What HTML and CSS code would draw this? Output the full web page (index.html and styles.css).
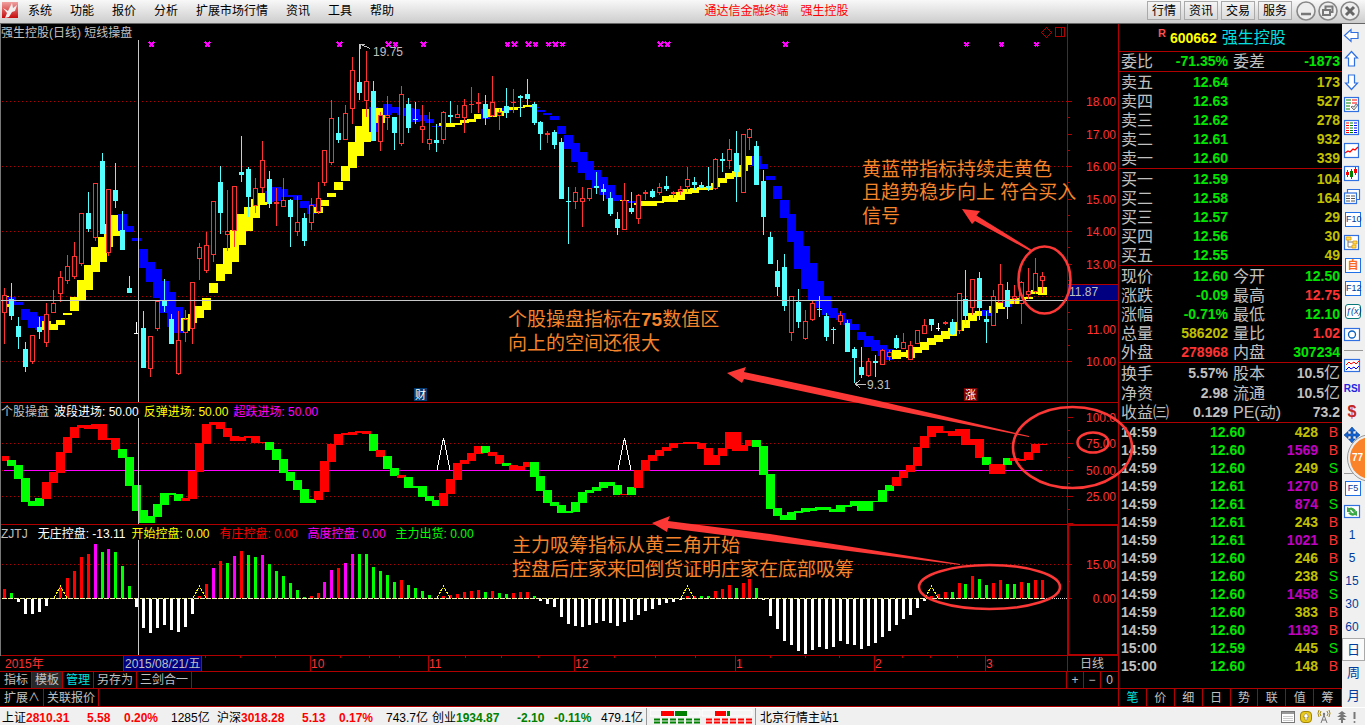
FILE: index.html
```html
<!DOCTYPE html>
<html lang="zh-CN">
<head>
<meta charset="utf-8">
<title>通达信金融终端 强生控股</title>
<link rel="stylesheet" href="styles.css">
</head>
<body>
<header class="menubar">
  <svg class="logo" viewBox="0 0 17 17" aria-hidden="true"><defs><linearGradient id="lg" x1="0" y1="0" x2="0" y2="1"><stop offset="0" stop-color="#f0a0a0"/><stop offset="1" stop-color="#c80c0c"/></linearGradient></defs><rect width="16" height="16" fill="url(#lg)"/><path d="M1 6l5 3L10 1l1 5 4-3-2 6-3 1-3 5-4 1 2-5z" fill="#f2eeee"/></svg>
  <nav class="menu">
    <button>系统</button><button>功能</button><button>报价</button><button>分析</button><button>扩展市场行情</button><button>资讯</button><button>工具</button><button>帮助</button>
  </nav>
  <div class="title"><span>通达信金融终端</span><span>强生控股</span></div>
  <div class="quick"><button>行情</button><button>资讯</button><button>交易</button><button>服务</button></div>
  <div class="winctl">
    <button aria-label="最小化"><svg viewBox="0 0 20 20"><circle cx="10" cy="10" r="9" fill="#eee" stroke="#888" stroke-width="1.6"/><path d="M5 13h10" stroke="#777" stroke-width="2.5"/></svg></button>
    <button aria-label="还原"><svg viewBox="0 0 20 20"><circle cx="10" cy="10" r="9" fill="#eee" stroke="#888" stroke-width="1.6"/><path d="M7.500 9V5.500h7V11H12M5 9h7v5H5z" fill="none" stroke="#777" stroke-width="2"/></svg></button>
    <button aria-label="关闭"><svg viewBox="0 0 20 20"><circle cx="10" cy="10" r="9" fill="#eee" stroke="#888" stroke-width="1.600"/><path d="M6 6l8 8M14 6l-8 8" stroke="#666" stroke-width="3"/></svg></button>
  </div>
</header>

<div class="workspace">
  <main class="charts">
    <section class="pane">
      <div class="legend"><span class="gray">强生控股(日线) 短线操盘</span></div>
      <svg id="price" viewBox="0 24 1118 379"></svg>
    </section>
    <section class="pane">
      <div class="legend"><span class="gray">个股操盘</span><span class="white">波段进场: 50.00</span><span class="yellow">反弹进场: 50.00</span><span class="magenta">超跌进场: 50.00</span></div>
      <svg id="osc" viewBox="0 403 1118 122"></svg>
    </section>
    <section class="pane">
      <div class="legend wide"><span class="gray">ZJTJ</span><span class="white">无庄控盘: -13.11</span><span class="yellow first">开始控盘: 0.00</span><span class="brightred">有庄控盘: 0.00</span><span class="magenta">高度控盘: 0.00</span><span class="lime">主力出货: 0.00</span></div>
      <svg id="ctrl" viewBox="0 525 1118 131"></svg>
    </section>
    <svg id="dates" viewBox="0 656 1118 16"></svg>
    <div class="tabs">
      <button>指标</button><button class="pressed">模板</button><button class="cyan">管理</button><button class="roomy">另存为</button><button class="roomy">三剑合一</button>
      <span class="zoomers"><button aria-label="放大">+</button><button aria-label="缩小">−</button><button>0</button></span>
    </div>
    <div class="tabs second"><button>扩展∧</button><button>关联报价</button></div>
    <svg class="notes" viewBox="0 24 1118 683">
      <g class="note">
        <text x="862" y="176">黄蓝带指标持续走黄色</text>
        <text x="862" y="199">且趋势稳步向上 符合买入</text>
        <text x="862" y="223">信号</text>
        <text x="508" y="326">个股操盘指标在<tspan class="strong">75</tspan>数值区</text>
        <text x="508" y="350">向上的空间还很大</text>
        <text x="512" y="552">主力吸筹指标从黄三角开始</text>
        <text x="512" y="576">控盘后庄家来回倒货证明庄家在底部吸筹</text>
      </g>
      <g fill="#fb3836">
        <path d="M962 209L980 211L976.500 215.500L1032 250L1030 251L975 221L972 224Z"/>
        <path d="M727 373L746 367L744 372L875 400L1029 436L1029 437L848 401L744 379L742 383Z"/>
        <path d="M652 523L670 516L668 521L770 534L960 564L960 565L770 541L668 528L667 532Z"/>
      </g>
      <g fill="none" stroke="#fb3836" stroke-width="2.600">
        <ellipse cx="1044.500" cy="280" rx="26" ry="33.500"/>
        <ellipse cx="1072.500" cy="447.500" rx="59.500" ry="40.500"/>
        <ellipse cx="1093" cy="442.500" rx="15.500" ry="10"/>
        <ellipse cx="989.500" cy="587" rx="70.500" ry="22"/>
      </g>
    </svg>
  </main>

  <aside class="panel">
    <h1 class="stock"><sup>R</sup><span class="code">600662</span><span class="name">强生控股</span></h1>
    <table class="quote"><colgroup><col class="a"><col class="b"><col class="c"><col class="d"></colgroup>
      <tbody><tr><th>委比</th><td class="g">-71.35%</td><th>委差</th><td class="g">-1873</td></tr></tbody>
      <tbody class="group">
        <tr><th>卖五</th><td class="g">12.64</td><th></th><td class="y">173</td></tr>
        <tr><th>卖四</th><td class="g">12.63</td><th></th><td class="y">527</td></tr>
        <tr><th>卖三</th><td class="g">12.62</td><th></th><td class="y">278</td></tr>
        <tr><th>卖二</th><td class="g">12.61</td><th></th><td class="y">932</td></tr>
        <tr><th>卖一</th><td class="g">12.60</td><th></th><td class="y">339</td></tr>
      </tbody>
      <tbody class="group">
        <tr><th>买一</th><td class="g">12.59</td><th></th><td class="y">104</td></tr>
        <tr><th>买二</th><td class="g">12.58</td><th></th><td class="y">164</td></tr>
        <tr><th>买三</th><td class="g">12.57</td><th></th><td class="y">29</td></tr>
        <tr><th>买四</th><td class="g">12.56</td><th></th><td class="y">30</td></tr>
        <tr><th>买五</th><td class="g">12.55</td><th></th><td class="y">49</td></tr>
      </tbody>
      <tbody class="group">
        <tr><th>现价</th><td class="g">12.60</td><th>今开</th><td class="g">12.50</td></tr>
        <tr><th>涨跌</th><td class="g">-0.09</td><th>最高</th><td class="r">12.75</td></tr>
        <tr><th>涨幅</th><td class="g">-0.71%</td><th>最低</th><td class="g">12.10</td></tr>
        <tr><th>总量</th><td class="y">586202</td><th>量比</th><td class="r">1.02</td></tr>
        <tr><th>外盘</th><td class="r">278968</td><th>内盘</th><td class="g">307234</td></tr>
      </tbody>
      <tbody>
        <tr><th>换手</th><td>5.57%</td><th>股本</th><td>10.5<i>亿</i></td></tr>
        <tr><th>净资</th><td>2.98</td><th>流通</th><td>10.5<i>亿</i></td></tr>
        <tr><th>收益㈢</th><td>0.129</td><th>PE(动)</th><td>73.2</td></tr>
      </tbody>
    </table>
    <table class="ticks"><tbody id="ticks"></tbody></table>
    <nav class="ptabs"><button class="cyan">笔</button><button>价</button><button>细</button><button>日</button><button>势</button><button>联</button><button>值</button><button>筹</button></nav>
  </aside>

  <nav class="tools">
    <button aria-label="后退"><svg viewBox="0 0 18 18"><path d="M1.500 8.500L8 2.500v3h7v6H8v3z" class="arrow"/></svg></button>
    <button aria-label="上"><svg viewBox="0 0 18 18"><path d="M8.500 1.500L14.500 8h-3v8h-6V8h-3z" class="arrow"/></svg></button>
    <button aria-label="下"><svg viewBox="0 0 18 18"><path d="M8.500 16.500L14.500 10h-3V2h-6v8h-3z" class="arrow"/></svg></button>
    <button aria-label="行情设置"><svg viewBox="0 0 18 18"><rect x="1.500" y="1.500" width="14" height="14" class="box"/><path d="M3 4h5M3 7h5M3 10h4M3 13h4" stroke="#008000"/><path d="M9 4h5M9 7h5" stroke="red"/><path d="M8 11l3 3 4-5-2-1-2 3-2-1z" fill="#ddd" stroke="#777"/></svg></button>
    <button aria-label="报价表"><svg viewBox="0 0 18 18"><rect x="1.500" y="1.500" width="14" height="14" class="box"/><path d="M3 4h3M3 6.500h3M3 9h3M3 11.500h3M3 13.500h3" stroke="red"/><path d="M7 4h3M7 6.500h3M7 9h3M7 11.500h3M7 13.500h3" stroke="#008000"/><path d="M11 4h3M11 6.500h3M11 9h3M11 11.500h3M11 13.500h3" stroke="blue"/></svg></button>
    <button aria-label="分时图"><svg viewBox="0 0 18 18"><rect x="1.500" y="1.500" width="14" height="14" class="box"/><path d="M2 11l3-2 2 1 3-3 2 1 3-3" fill="none" stroke="red" stroke-width="1.300"/></svg></button>
    <button aria-label="K线图"><svg viewBox="0 0 18 18"><rect x="1.500" y="1.500" width="14" height="14" class="box"/><path d="M4.500 5v7M12.500 2v8" stroke="red"/><path d="M8.500 4v10" stroke="#008000"/><path d="M3 7h3v3H3zM11 4h3v4h-3z" fill="red"/><path d="M7 6h3v6H7z" fill="#008000"/></svg></button>
    <button aria-label="资料"><svg viewBox="0 0 18 18"><path d="M4.500 5V1.500h12v10H14" class="box"/><rect x="1.500" y="5" width="12" height="10.500" class="box"/><path d="M3 8h4M8 8h4M3 10.500h4M8 10.500h4M3 13h4M8 13h4" stroke="#555"/></svg></button>
    <button class="sq">F10</button>
    <button aria-label="结构"><svg viewBox="0 0 18 18"><rect x="1.500" y="1.500" width="14" height="14" class="box"/><path d="M5 5v8h4M5 8h5" fill="none" stroke="#777"/><path d="M3 3h5v3H3zM10 7h4v3h-4zM9 11h4v3H9z" fill="#fd5" stroke="#d90" stroke-width=".8"/></svg></button>
    <button class="sq self">自</button>
    <button class="sq">F12</button>
    <button class="sq fx">ƒ(x)</button>
    <button aria-label="圆"><svg viewBox="0 0 18 18"><rect x="1.500" y="2.500" width="15" height="12" class="box"/><circle cx="9" cy="8.500" r="3.500" fill="none" stroke="#0860c0" stroke-width="1.300"/></svg></button>
    <hr>
    <button aria-label="波浪"><svg viewBox="0 0 18 18"><rect x="1.500" y="2.500" width="15" height="12" class="box"/><path d="M3 8l3-3 2 2 3-2 2 2 3-3" fill="none" stroke="red"/><path d="M3 13l3-3 2 2 3-2 2 2 3-3" fill="none" stroke="blue"/></svg></button>
    <button class="rsi">RSI</button>
    <button class="dollar">$</button>
    <button aria-label="移动"><svg viewBox="0 0 18 18"><path d="M9 1l3.500 4H10v3h3V5.500L17 9l-4 3.500V10h-3v3h2.500L9 17l-3.500-4H8v-3H5v2.500L1 9l4-3.500V8h3V5H5.500z" fill="#1464d2" stroke="#063c90" stroke-width=".6"/></svg></button>
    <button aria-label="工具箱"></button>
    <hr>
    <button class="sq">F5</button>
    <button aria-label="刷新"><svg viewBox="0 0 18 18"><rect x="1.500" y="2.500" width="15" height="12" class="box"/><path d="M4 9V4l2 1q4-2 7 3l-3 1q-2-3-3-2l1 2zM14 8v5l-2-1q-4 2-7-2l3-1q2 2 3 1l-1-1z" fill="#39a845"/></svg></button>
    <button>1</button><button>5</button><button>15</button><button>30</button><button>60</button>
    <button class="han active">日</button><button class="han">周</button><button class="han">月</button>
  </nav>
  <div class="ball">77</div>
</div>

<footer class="status">
  <div class="index up"><span>上证</span><b>2810.31</b><b>5.58</b><b>0.20%</b><span>1285亿</span></div>
  <div class="index up"><span>沪深</span><b>3018.28</b><b>5.13</b><b>0.17%</b><span>743.7亿</span></div>
  <div class="index down"><span>创业</span><b>1934.87</b><b>-2.10</b><b>-0.11%</b><span>479.1亿</span></div>
  <div class="meters">
    <svg viewBox="0 0 104 17" aria-hidden="true">
      <path d="M0 2h50v6H0zM52 2h50v6H52z" fill="#f4f4f4" stroke="#fff"/>
      <path d="M11 3h13v5H11zM65 3h11v5H65z" fill="red"/><path d="M25 3h12v5H25zM77 3h3v5h-3z" fill="#008000"/>
      <path d="M4 11.500h46M4 14.500h46" stroke="#008000" stroke-width="2" stroke-dasharray="6 2"/>
      <path d="M56 11.500h46M56 14.500h46" stroke="red" stroke-width="2" stroke-dasharray="6 2"/>
    </svg>
  </div>
  <span class="server">北京行情主站1</span>
  <svg class="tray" viewBox="0 0 84 17" aria-hidden="true">
    <rect x=".5" y="3.500" width="13" height="11" fill="#fff" stroke="#777"/><path d="M1 5h12" stroke="#999" stroke-width="2"/><path d="M2 8.500h10M2 10.500h10M2 12.500h10" stroke="#ccc"/>
    <rect x="19.500" y="3.500" width="11" height="11" rx="3.500" fill="#e8c91e" stroke="#a08408"/><path d="M25 5l3 4h-2v3h-2V9h-2z" fill="#fff" stroke="#765" stroke-width=".5"/>
    <path d="M43 7l-3 8M43 7l3 8M41 12h4" stroke="#777" fill="none"/><path d="M40 3q-2 3 0 5M46 3q2 3 0 5M38 2q-2 3 0 7M48 2q2 3 0 7" stroke="#a08408" fill="none"/><circle cx="43" cy="6" r="1.200" fill="#777"/>
    <path d="M61 3l4 3h-3l4 3h-4l3 3h-3v3h-2v-3h-3l3-3h-4l4-3h-3z" fill="#777"/>
    <path d="M73.500 4v7" stroke="#777" stroke-width="2"/><circle cx="73.500" cy="14" r="1" fill="#777"/>
  </svg>
</footer>
<script src="chart.js"></script>
</body>
</html>
```

FILE: styles.css
```css
* { box-sizing: border-box; }
body {
  margin: 0;
  background: #000;
  color: #c0c0c0;
  font: 12px/16px "Liberation Sans", "Noto Sans CJK SC", sans-serif;
  overflow-x: hidden;
}
button {
  margin: 0;
  padding: 0;
  border: 0;
  background: none;
  color: inherit;
  font: inherit;
  white-space: nowrap;
}
svg { display: block; }

.menubar {
  display: flex;
  align-items: center;
  height: 24px;
  padding: 0 5px 2px 2px;
  background: linear-gradient(#f8f8f8, #cdcdcd);
  border-bottom: 1px solid #666;
  color: #000;
}
.logo { width: 17px; height: 17px; margin-right: 9px; }
.menu { display: flex; gap: 18px; }
.title {
  flex: 1;
  display: flex;
  justify-content: center;
  gap: 12px;
  padding-left: 12px;
  color: #f00;
}
.quick { display: flex; gap: 3px; }
.quick button {
  width: 34px;
  height: 19px;
  background: linear-gradient(#f4f4f4, #dadada);
  border: 1px solid #aaa;
}
.winctl { display: flex; gap: 2px; margin-left: 4px; }
.winctl button, .winctl svg { width: 20px; height: 20px; }

.workspace {
  position: relative;
  display: grid;
  grid-template-columns: minmax(0, 1fr) 224px 23px;
  overflow: hidden;
}
.charts { position: relative; }
.charts > svg, .pane > svg { width: 100%; }
.pane { position: relative; }
.legend {
  position: absolute;
  top: 1px;
  left: 1px;
  display: flex;
  gap: 5px;
  white-space: nowrap;
}
.legend.wide { gap: 10px; }
.legend .first { margin-left: -4px; }
.gray { color: #c0c0c0; }
.white { color: #fff; }
.yellow { color: #ff0; }
.magenta { color: #f0f; }
.lime { color: #0f0; }
.brightred { color: #f00; }
.cyan { color: #00e0e0; }

.charts text { font: 12px "Liberation Sans", "Noto Sans CJK SC", sans-serif; }
.charts .axis { fill: #ff3232; text-anchor: end; }
.charts .month { fill: #ff3232; }
.charts .plain { fill: #c0c0c0; }
.charts .badge { fill: #fff; font-size: 11px; text-anchor: middle; }
.notes {
  position: absolute;
  top: 0;
  left: 0;
  overflow: visible;
  z-index: 2;
  pointer-events: none;
}
.charts .note text { font-size: 19px; fill: #f5842a; }
.note .strong { font-weight: bold; }

.tabs {
  display: flex;
  height: 17px;
  padding-left: 1px;
  border-bottom: 1px solid #b00000;
}
.tabs button { padding: 0 3px; border-right: 1px solid #b00000; }
.tabs .pressed { background: #282828; }
.zoomers { display: flex; margin-left: auto; border-left: 1px solid #b00000; }
.zoomers button { width: 17px; text-align: center; padding: 0; }
.zoomers button:last-child { border-right: 0; }
.second { height: 18px; }

.panel {
  display: flex;
  flex-direction: column;
  border-left: 1px solid #b00000;
}
.stock {
  display: flex;
  align-items: center;
  height: 28px;
  margin: 0;
  padding-left: 39px;
  border-bottom: 1px solid #b00000;
  font-size: 14px;
}
.stock sup { color: #ff5050; font-size: 11px; line-height: 11px; align-self: flex-start; padding-top: 4px; margin-right: 4px; }
.code { color: #ff0; }
.name { margin-left: 5px; color: #00e0e0; font-size: 16px; font-weight: normal; }

table { border-collapse: collapse; table-layout: fixed; width: 100%; }
.quote tbody { border-bottom: 1px solid #b00000; }
.quote .a { width: 52px; }
.quote .b { width: 57px; }
.quote .c { width: 48px; }
th, td { padding: 0; white-space: nowrap; }
.quote th, .quote td { height: 19px; line-height: 19px; }
.quote .group tr:first-child > * { height: 20px; padding-top: 1px; }
.quote th { padding-left: 2px; text-align: left; font-size: 16px; font-weight: normal; }
.quote th + td + th { padding-left: 5px; }
td { font-size: 14px; font-weight: bold; text-align: right; }
.quote td:last-child { padding-right: 2px; }
td i { font-size: 16px; font-style: normal; font-weight: normal; }
.g { color: #00e600; }
.y { color: #c0c000; }
.r { color: #ff3232; }
.m { color: #c000c0; }
.ticks td { height: 18px; line-height: 18px; }
.ticks td:first-child { width: 60px; padding-left: 2px; text-align: left; }
.ticks td:nth-child(2) { width: 66px; }
.ticks td:last-child { width: 24px; padding-right: 4px; font-weight: normal; }
.ptabs {
  display: grid;
  grid-template-columns: repeat(8, 1fr);
  height: 19px;
  margin-top: auto;
  border: solid #b00000;
  border-width: 1px 0;
}
.ptabs button { border-right: 1px solid #b00000; }

.tools {
  display: flex;
  flex-direction: column;
  background: #f0f0f0;
  color: #003c9c;
}
.tools button { display: grid; place-items: center; height: 23px; padding-right: 3px; }
.tools svg { width: 18px; height: 18px; }
.tools hr { width: 19px; height: 1px; margin: 4px 2px 3px; border: 0; background: #999; }
.arrow, .box { fill: #fff; stroke: #3070e0; stroke-width: 1.2; }
.tools .sq {
  width: 16px;
  height: 15px;
  margin: 4px 3px;
  padding: 0;
  border: 1px solid #2070e8;
  background: #fff;
  font-size: 9px;
  line-height: 13px;
}
.tools .self { color: #fa6a1e; font-size: 11px; font-weight: bold; }
.tools .fx { border: 1px solid #087878; border-radius: 3px; font-style: italic; }
.tools .rsi { color: #2424e0; font-size: 10px; font-weight: bold; }
.tools .dollar { color: #c42828; font-size: 16px; font-weight: bold; }
.tools .han { padding: 0; font-size: 13px; }
.tools .active { background: #fafafa; border: 1px solid #aaa; }
.ball {
  position: absolute;
  top: 410px;
  right: -30px;
  width: 48px;
  height: 48px;
  border: 3px solid #eee;
  border-radius: 50%;
  outline: 1px solid #999;
  outline-offset: -1px;
  background: #fa8228;
  color: #fff;
  font-size: 10px;
  font-weight: bold;
  line-height: 42px;
  padding-left: 2px;
  z-index: 3;
}

.status {
  display: flex;
  height: 18px;
  padding-left: 2px;
  background: #f0f0f0;
  border-top: 1px solid #fff;
  color: #000;
  line-height: 20px;
  white-space: nowrap;
}
.index { display: grid; grid-template-columns: 24px 61px 37px 47px 46px; }
.up b { color: #f00; }
.down b { color: #008000; }
.meters { padding: 0 1px 0 3px; margin: 0 4px 0 -1px; border: solid #999; border-width: 0 1px; }
.meters svg { width: 104px; height: 17px; }
.tray { width: 84px; height: 17px; margin-left: auto; }
```

FILE: chart.js
```js
const RED = '#b00000';
const COLORS = { R: '#ff0000', G: '#00ff00', M: '#ff00ff', W: '#ffffff', Y: '#ffff00', B: '#0000ff' };
const barX = i => Math.round(3.975 + 6.9675 * i);
const rect = (x, y, w, h, fill) => `<rect x="${x}" y="${y}" width="${w}" height="${h}" fill="${fill}"/>`;
const label = (x, y, cls, s) => `<text x="${x}" y="${y}" class="${cls}">${s}</text>`;
const path = (d, stroke, extra = '') => `<path d="${d}" fill="none" stroke="${stroke}" ${extra}/>`;
const dotted = (y, stroke = RED, end = 1067) => path(`M2 ${y}.5H${end}`, stroke, 'stroke-dasharray="1 3"');
const draw = (id, s) => { document.getElementById(id).innerHTML = `<g shape-rendering="crispEdges">${s}</g>`; };

// high, body top, body bottom, low, kind (r rising, c falling, w flat)
const candles = `288 295 313 344 r|283 299 316 320 c|317 326 337 349 c|342 349 367 372 c|335 335 362 364 r|317 327 332 339 c|303 314 343 347 r|290 303 313 313 r|271 277 294 302 r|255 266 281 284 r|242 256 277 279 r|213 213 264 266 r|192 213 229 232 c|183 183 238 241 r|153 161 234 234 c|189 189 253 256 r|163 190 201 208 c|211 230 250 250 c|276 288 293 293 c|322 333 334 334 w|311 328 368 368 c|336 336 369 377 r|301 301 329 331 r|279 300 306 312 c|314 319 344 344 c|311 340 374 375 r|310 319 333 342 r|282 282 329 344 r|243 247 259 280 r|232 245 271 273 r|201 201 255 262 r|166 182 213 234 c|190 231 235 251 r|186 186 231 247 r|136 172 175 182 c|167 169 197 217 c|178 188 206 213 r|141 160 188 193 r|171 179 204 208 c|188 202 204 226 r|178 200 207 207 r|199 200 217 247 c|196 222 232 236 r|213 218 241 246 c|198 205 223 230 r|182 198 212 214 r|150 150 183 186 r|100 118 163 165 r|117 133 140 143 c|105 113 140 140 r|57 70 109 124 r|44 82 93 100 c|51 81 101 117 r|81 91 141 141 c|112 115 142 151 r|96 115 118 130 r|117 117 133 150 c|86 94 144 146 r|98 104 128 133 c|102 119 120 124 c|105 126 130 143 r|112 139 144 150 r|124 140 143 152 c|111 112 140 144 r|101 115 117 123 c|105 114 118 118 r|99 105 118 133 r|87 104 105 113 r|93 102 104 113 r|95 104 118 125 c|76 102 116 117 r|109 112 116 130 r|88 106 113 118 c|89 102 103 113 r|95 96 98 117 c|79 94 99 105 c|102 104 123 125 c|121 122 134 150 c|131 133 135 143 r|130 132 145 149 c|138 142 199 199 c|187 201 202 244 c|187 192 202 209 r|187 198 202 227 r|188 188 199 201 r|172 186 188 194 c|184 189 192 201 c|192 198 214 216 c|212 219 228 235 c|183 200 230 230 r|192 208 212 214 c|194 195 219 224 r|190 192 194 200 r|189 191 197 198 c|183 187 193 195 r|176 186 189 191 c|191 192 194 198 r|186 189 192 195 r|167 179 187 192 r|177 182 185 190 c|182 185 188 188 c|167 186 188 191 c|158 159 189 190 r|153 159 161 172 c|139 149 161 169 r|131 153 172 202 c|134 134 193 193 r|128 129 138 150 r|141 146 185 185 c|170 181 217 235 c|232 237 264 264 c|260 271 287 296 c|254 267 306 311 c|296 296 333 341 r|289 302 322 328 c|310 321 339 340 r|301 303 320 321 r|296 309 310 317 c|313 316 337 341 c|327 329 330 344 c|311 315 322 325 r|320 323 352 352 c|347 349 358 383 c|347 367 375 378 c|358 361 376 377 r|355 361 363 377 c|349 350 365 365 r|350 352 357 361 r|335 338 348 349 c|333 342 349 349 r|341 345 360 360 r|330 330 344 344 r|319 325 334 334 r|319 319 325 331 c|323 328 329 331 w|321 322 324 325 r|319 322 334 335 c|293 293 331 334 r|270 299 316 324 c|279 279 308 315 r|272 278 308 320 c|311 319 322 343 c|290 296 326 326 r|264 284 303 303 r|282 290 307 319 c|285 296 299 304 r|281 282 304 324 r|268 291 295 299 r|258 273 292 294 r|272 276 281 293 r`.split('|');

const band = `Y296 307|B297 304|B302 305|B309 320|B312 328|B316 330|Y321 330|Y324 330|Y320 325|Y313 315|Y297 311|Y280 300|Y265 290|Y247 272|Y237 262|Y224 247|Y215 236|B214 231|B226 232|B238 241|B249 268|B262 282|B269 298|B281 313|B292 327|B307 333|Y318 331|Y314 323|Y306 318|Y298 310|Y283 293|Y264 281|Y248 274|Y230 262|Y214 245|Y207 231|Y199 218|Y193 205|B191 202|B187 201|B189 197|B195 197|B195 200|B201 208|B204 214|Y207 213|Y200 206|Y193 197|Y182 190|Y166 181|Y142 168|Y126 156|Y109 142|B107 132|Y108 123|B104 115|B107 113|B108 115|B108 116|B109 122|B115 121|B119 123|B126 127|Y123 126|Y123 127|Y123 125|Y120 123|Y119 122|Y114 119|B109 119|Y109 117|Y108 116|B108 111|Y107 110|Y107 108|Y105 107|B107 108|B110 112|B113 115|B116 120|B126 134|B135 149|B143 162|B152 173|B161 180|B170 188|B177 195|B185 199|B195 201|Y200 201|B201 203|Y203 205|Y201 206|Y201 206|Y201 203|Y196 202|Y195 202|Y192 200|Y189 194|Y188 193|Y187 190|Y187 190|Y183 187|Y178 183|Y173 179|Y171 177|Y165 171|Y156 165|B156 166|B164 169|B176 180|B186 199|B200 218|B214 242|B231 269|B246 289|B263 301|B281 308|B296 315|B308 318|B313 320|B319 325|B324 330|B332 340|B336 347|B340 351|B345 356|B349 360|Y350 359|Y352 357|Y350 358|Y347 353|Y342 350|Y338 345|Y335 342|Y331 339|Y328 336|Y322 331|Y320 328|Y313 321|Y311 316|B310 316|Y306 313|Y302 309|B302 307|Y299 304|Y298 301|Y297 299|Y290 294|Y287 295`.split('|');

const wave = `R456 461|G460 466|G465 479|G478 502|G501 506|G498 506|R482 499|R472 483|R452 473|R437 453|R427 438|R425 428|R425 429|R424 429|R424 440|R438 440|R438 450|G449 458|G457 486|G485 511|G510 523|G516 523|G504 517|G493 505|G493 495|G494 501|R498 501|R471 499|R443 472|R424 444|R422 425|R422 429|R428 437|R436 441|R437 441|R436 438|R436 443|R442 443|G442 450|G449 460|G459 473|G472 481|G480 490|G489 503|G499 503|R491 500|R461 492|R444 462|R434 445|R433 435|R432 435|R431 433|R431 434|G434 451|R450 457|G456 469|G468 476|R475 478|G477 488|G486 488|G486 497|G496 501|G500 506|R493 506|R479 494|R463 480|R460 464|R453 461|R446 454|G446 453|R452 456|R455 464|G463 466|R465 470|R466 470|R462 467|G462 477|G476 491|G490 503|G502 506|G505 513|G511 513|G502 512|G492 503|G490 493|G487 491|G482 488|G482 486|G485 495|R494 495|G487 495|R470 488|R460 471|R455 461|R450 456|R447 451|R443 448|R443 444|R442 444|R442 444|R443 449|R448 465|R455 465|R448 456|R432 449|R432 451|R445 451|R440 446|G440 447|G446 475|G474 509|G508 516|G515 520|G512 520|G511 513|G508 512|G508 511|G507 510|G507 510|G509 512|G505 512|G505 507|G501 506|G501 511|G501 511|G501 502|G490 502|G485 491|R477 486|R471 478|R465 472|R447 466|R436 448|R426 437|R426 433|R431 433|R431 436|R429 436|R429 445|R439 445|R439 458|G457 465|R464 474|R464 474|G458 465|R458 461|R459 461|R452 460|R444 453|R444 445`.split('|');

// W bars hang below the zero line, all others rise above it
const control = 'R9 G5 W3 W15 W15 W13 W7 W0 R11 R20 R27 R41 R44 M54 G46 M49 G46 G32 G12 W8 W29 W34 W29 W26 W31 W33 W28 W15 R2 R14 M30 R37 G35 M42 R47 G43 G41 M43 G34 G27 G22 G15 G8 G1 R2 R5 M16 M28 R30 M35 M44 G44 G44 G31 G27 G23 G16 R18 G13 G10 G7 G3 W0 R2 R3 R4 R6 R7 R8 G6 R7 G5 G4 R5 R6 R6 G2 W2 W5 W8 W18 W25 W27 W28 W26 W24 W22 W24 W27 W23 W21 W16 W12 W10 W6 W4 W3 W1 R2 R2 G2 G2 R7 R9 R13 G10 R15 R19 G10 W1 W17 W30 W42 W46 W52 W55 W51 W48 W50 W48 W42 W45 W46 W50 W47 W44 W38 W32 W26 W20 W16 W9 W2 R2 R4 R6 G6 R15 G14 R22 G19 G13 R15 R18 G14 G14 R16 G15 R18 R18'.split(' ');

const steps = list => list.map((s, i) => {
  const [top, bottom] = s.slice(1).split(' ').map(Number);
  const left = Math.max(barX(i) - 4, 2);
  return rect(left, top, barX(i) + 5 - left, bottom - top, COLORS[s[0]]);
}).join('');

// price pane
let s = [101, 166, 231, 296, 361].map(y => dotted(y)).join('') + steps(band);
candles.forEach((row, i) => {
  const [hi, top, bot, lo, kind] = row.split(' ').map((v, k) => k < 4 ? +v : v);
  const x = barX(i);
  if (kind === 'w') {
    s += rect(x, hi, 1, lo - hi, '#fff') + rect(x - 2, top, 4, 1, '#fff');
    return;
  }
  const c = kind === 'r' ? '#ff3232' : '#54ffff';
  s += rect(x, hi, 1, Math.max(lo - hi, 1), c) + rect(x - 2, top, 5, Math.max(bot - top, 1), c);
  if (kind === 'r' && bot - top > 2) s += rect(x - 1, top + 1, 3, bot - top - 2, '#000');
});
const marks = { 151: 1, 207: 1, 339: 1, 388: 1, 395: 0, 423: 1, 507: 0, 514: 1, 528: 1, 535: 0, 548: 0, 555: 1, 562: 0, 660: 1, 667: 1, 785: 1, 966: 0, 1001: 0, 1036: 0 };
for (const x in marks) {
  const r = 2 + marks[x] / 2;
  s += path(`M${+x + .5 - r} ${44.5 - r}l${2 * r} ${2 * r}m0 ${-2 * r}l${-2 * r} ${2 * r}`, '#f0f', 'stroke-width="1.5"') + (marks[x] ? rect(+x - 1, 43, 3, 3, '#f0f') : '');
}
s += path('M360.5 49V44.500l10 4M361 44.500h4M860 380.500l-5 3.500 5 3.500M855 384.500h11', '#c0c0c0');
s += label(373, 56, 'plain', '19.75') + label(867, 389, 'plain', '9.31');
s += rect(414, 388, 13, 13, '#003a70') + label(420.5, 399, 'badge', '财') + rect(964, 388, 13, 13, '#800000') + label(970.5, 399, 'badge', '涨');
s += path('M1046.500 27.500l5 5-5 5-5-5zM1055.500 27.500h9v9h-9zM1061.500 27v10', RED);
s += path('M1067.500 24V403M0 402.500H1118', RED);
for (let k = 0; k < 17; k++) s += rect(1068, Math.round(101 + k * 16.25), k % 2 ? 2 : 4, 1, RED);
[18, 17, 16, 15, 14, 13, 0, 11, 10].forEach((v, k) => { if (v) s += label(1116, Math.round(106 + k * 32.5), 'axis', v + '.00'); });
s += rect(0, 300, 1067, 1, '#c8c8c8') + rect(138, 40, 1, 362, '#c8c8c8');
s += rect(1068, 284, 50, 17, '#000080') + rect(1068, 284, 50, 1, RED) + rect(1068, 300, 50, 1, RED) + label(1069, 296, 'plain', '11.87');
draw('price', s + rect(0, 24, 1, 379, '#777'));

// oscillator pane
s = [443, 470, 496].map(y => dotted(y)).join('') + rect(4, 470, 1038, 1, '#f0f') + steps(wave);
s += path('M437 470L443.500 438L450 470M618 470L624.500 438L631 470', '#fff');
s += path('M1067.500 403V525M0 524.500H1118', RED);
for (let k = 0; k < 9; k++) s += rect(1068, Math.round(417 + k * 13.2), k % 2 ? 2 : 5, 1, RED);
[['100.0', 422], ['75.00', 448], ['50.00', 475], ['25.00', 501]].forEach(([t, y]) => { s += label(1116, y, 'axis', t); });
draw('osc', s + rect(138, 418, 1, 106, '#c8c8c8') + rect(0, 403, 1, 122, '#777'));

// control pane
s = dotted(564);
control.forEach((v, i) => {
  const h = +v.slice(1);
  s += rect(barX(i) - 1, v[0] === 'W' ? 599 : 598 - h, 3, h, COLORS[v[0]]);
});
s += path('M2 598.500H1067', '#ddd', 'stroke-dasharray="1 1"') + path('M2 598.500H1044', '#ff8', 'stroke-dasharray="2 1"');
[8, 28, 63, 98, 133].forEach(i => { const x = barX(i); s += path(`M${x - 6} 598L${x + .5} 586L${x + 7} 598`, '#ff0', 'stroke-dasharray="3 1"'); });
s += path('M0 655.500H1118M1067.500 525V656M1068.500 525.500H1117.500V654.500H1068.500z', RED) + rect(1068, 564, 4, 1, RED) + rect(1068, 598, 4, 1, RED) + rect(1068, 581, 2, 1, RED);
s += label(1116, 569, 'axis', '15.00') + label(1116, 603, 'axis', '0.00');
draw('ctrl', s + rect(138, 540, 1, 115, '#c8c8c8') + rect(0, 525, 1, 131, '#777'));

// date axis
s = label(5, 668, 'month', '2015年') + rect(123, 656, 79, 15, '#000080') + path('M123.500 656V671M201.500 656V671', RED) + label(125, 668, 'plain', '2015/08/21/五');
[[310, 10], [428, 11], [574, 12], [735, 1], [874, 2], [985, 3]].forEach(([x, m]) => { s += rect(x, 656, 1, 15, RED) + label(x + 1, 668, 'month', m); });
[205, 240, 275, 340, 369, 399, 465, 501, 538, 614, 655, 695, 770, 805, 839, 902, 930, 957].forEach(x => { s += rect(x, 656, 1, 2, RED); });
draw('dates', s + path('M1067.500 656V672M0 671.500H1118', RED) + label(1080, 668, 'plain', '日线'));

// trades
document.getElementById('ticks').innerHTML = `14:59 12.60 428 B|14:59 12.60 1569 B|14:59 12.60 249 S|14:59 12.61 1270 B|14:59 12.61 874 S|14:59 12.61 243 B|14:59 12.61 1021 B|14:59 12.60 246 B|14:59 12.60 238 S|14:59 12.60 1458 S|14:59 12.60 383 B|14:59 12.60 1193 B|15:00 12.59 445 S|15:00 12.60 148 B`.split('|').map(r => {
  const [time, price, vol, side] = r.split(' ');
  return `<tr><td>${time}</td><td class="g">${price}</td><td class="${vol > 500 ? 'm' : 'y'}">${vol}</td><td class="${side === 'B' ? 'r' : 'g'}">${side}</td></tr>`;
}).join('');
```
